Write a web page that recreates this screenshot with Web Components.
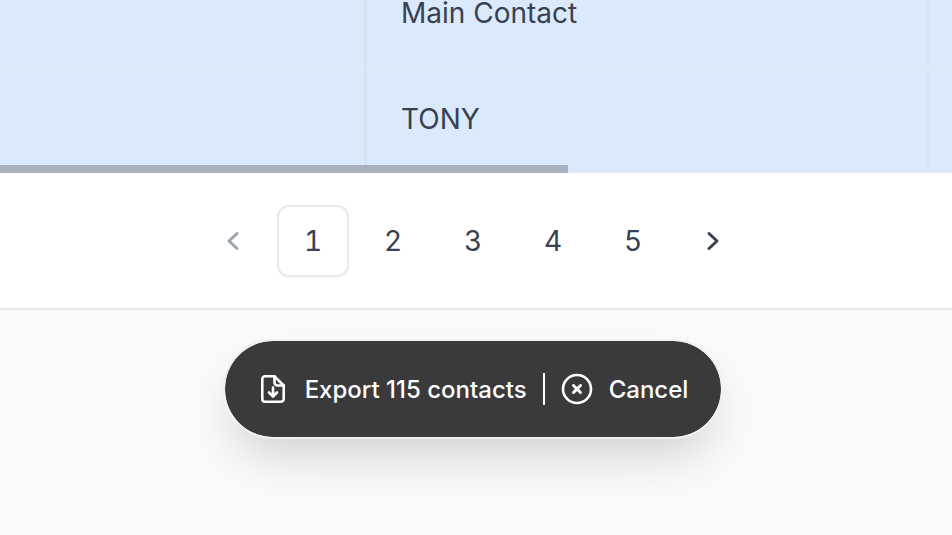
<!DOCTYPE html>
<html>
<head>
<meta charset="utf-8">
<style>
  html, body { margin: 0; padding: 0; height: 535px; overflow: hidden; background: #f9fafb; }
  body { font-family: Inter, "Liberation Sans", sans-serif; display: flex; flex-direction: column; }
</style>
</head>
<body>
<contact-table>
  <table-row>Main Contact</table-row>
  <table-row>TONY</table-row>
</contact-table>
<page-nav></page-nav>
<export-bar count="115"></export-bar>

<script>
class ContactTable extends HTMLElement {
  constructor() {
    super()
    this.attachShadow({ mode: "open" })
    this.shadowRoot.innerHTML = `
      <style>
        :host { display: block; position: relative; height: 173px; overflow: hidden; background: #dbe9fc; flex: none; }
        .rows { margin-top: -39px; }
        .bar { position: absolute; left: 0; bottom: 0; width: 568px; height: 8px; background: #a9b1bd; }
      </style>
      <div class="rows"><slot></slot></div>
      <div class="bar"></div>
    `
  }
}
customElements.define("contact-table", ContactTable)

class TableRow extends HTMLElement {
  constructor() {
    super()
    this.attachShadow({ mode: "open" })
    this.shadowRoot.innerHTML = `
      <style>
        :host { display: grid; grid-template-columns: 367px 562px 1fr; height: 106px; border-bottom: 2px solid #dfe8f6; box-sizing: border-box; }
        div { box-sizing: border-box; }
        .first { border-right: 3px solid #d7e2f2; }
        .text { display: flex; align-items: center; padding-left: 34px; font-size: 28px; color: #374151; border-right: 2px solid #d9e5f6; }
      </style>
      <div class="first"></div>
      <div class="text"><slot></slot></div>
      <div></div>
    `
  }
}
customElements.define("table-row", TableRow)

class PageNav extends HTMLElement {
  constructor() {
    super()
    this.attachShadow({ mode: "open" })
    const pages = [1, 2, 3, 4, 5].map(n =>
      `<span class="page ${n === 1 ? "on" : ""}">${n}</span>`).join("")
    this.shadowRoot.innerHTML = `
      <style>
        :host { display: flex; justify-content: center; align-items: center; gap: 8px; height: 137px; box-sizing: border-box; padding-right: 6px; background: #fff; border-bottom: 2px solid #e5e7eb; flex: none; }
        .page { width: 72px; height: 72px; box-sizing: border-box; display: flex; align-items: center; justify-content: center; font-size: 28px; font-variant-numeric: tabular-nums; color: #374151; border-radius: 12px; border: 2px solid transparent; }
        .on { border-color: #e8e9ee; box-shadow: 0 1px 2px rgba(0,0,0,.05); }
        svg { width: 40px; height: 40px; fill: none; stroke-width: 3; stroke-linecap: round; stroke-linejoin: round; }
        .arrow { width: 72px; height: 72px; display: flex; align-items: center; justify-content: center; }
      </style>
      <span class="arrow"><svg viewBox="0 0 40 40" stroke="#9ca3af"><path d="M24 12.500L16 20L24 27.500"/></svg></span>
      ${pages}
      <span class="arrow"><svg viewBox="0 0 40 40" stroke="#374151"><path d="M16 12.500L24 20L16 27.500"/></svg></span>
    `
  }
}
customElements.define("page-nav", PageNav)

class ExportBar extends HTMLElement {
  static get observedAttributes() {
    return ["count"]
  }
  attributeChangedCallback(name, oldVal, newVal) {
    if (oldVal !== newVal) this[name] = newVal
  }
  constructor() {
    super()
    this.attachShadow({ mode: "open" })
  }
  connectedCallback() {
    this.shadowRoot.innerHTML = `
      <style>
        :host { display: flex; justify-content: center; align-items: flex-start; padding: 29px 6px 0 0; flex: 1; }
        .pill { display: flex; align-items: center; height: 100px; box-sizing: border-box; padding: 0 33px 0 32px; border-radius: 50px; background: #3a3a3c; background-clip: padding-box; border: 2px solid #f0f1f3; color: #fff; font-size: 24px; font-weight: 500; box-shadow: 0 25px 50px -12px rgba(0,0,0,.18); }
        svg { flex: none; fill: none; stroke: #fff; stroke-width: 2.600; stroke-linecap: round; stroke-linejoin: round; }
        .sep { width: 2px; height: 32px; background: #fff; margin: 0 16px; }
        .label { margin-left: 16px; white-space: nowrap; }
      </style>
      <div class="pill">
        <svg width="32" height="32" viewBox="0 0 32 32"><path d="M5.300 6A2.700 2.700 0 0 1 8 3.300H17.500L26.700 12.500V26A2.700 2.700 0 0 1 24 28.700H8A2.700 2.700 0 0 1 5.300 26Z"/><path d="M17.500 3.300V9.500A3 3 0 0 0 20.500 12.500H26.700"/><path d="M16 14.500V23M12 19.500L16 23.500L20 19.500"/></svg>
        <span class="label">Export ${this.count} contacts</span>
        <span class="sep"></span>
        <svg width="32" height="32" viewBox="0 0 32 32"><circle cx="16" cy="16" r="14"/><path stroke-width="3" d="M12.500 12.500L19.500 19.500M19.500 12.500L12.500 19.500"/></svg>
        <span class="label">Cancel</span>
      </div>
    `
  }
}
customElements.define("export-bar", ExportBar)
</script>
</body>
</html>
